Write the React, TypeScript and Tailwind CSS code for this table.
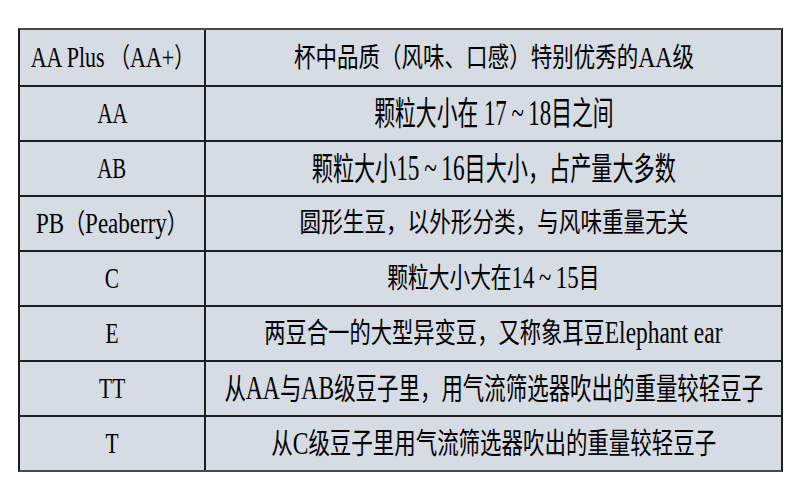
import React from "react";

type Row = {
  l: string;
  r: string;
  rf: string;
  rs: string;
  ls: string;
};

const rows: Row[] = [
  { l: "AA Plus （AA+）", r: "杯中品质（风味、口感）特别优秀的AA级", rf: "text-[27px]", rs: "scale-x-[0.797]", ls: "scale-x-[0.74]" },
  { l: "AA", r: "颗粒大小在 17\u2009~\u200918目之间", rf: "text-[33px]", rs: "scale-x-[0.63]", ls: "scale-x-[0.7]" },
  { l: "AB", r: "颗粒大小15\u2009~\u200916目大小，占产量大多数", rf: "text-[32px]", rs: "scale-x-[0.66]", ls: "scale-x-[0.7]" },
  { l: "PB（Peaberry）", r: "圆形生豆，以外形分类，与风味重量无关", rf: "text-[27px]", rs: "scale-x-[0.8]", ls: "scale-x-[0.775]" },
  { l: "C", r: "颗粒大小大在14\u2009~\u200915目", rf: "text-[28px]", rs: "scale-x-[0.74]", ls: "scale-x-[0.72]" },
  { l: "E", r: "两豆合一的大型异变豆，又称象耳豆Elephant ear", rf: "text-[28px]", rs: "scale-x-[0.76]", ls: "scale-x-[0.72]" },
  { l: "TT", r: "从AA与AB级豆子里，用气流筛选器吹出的重量较轻豆子", rf: "text-[30px]", rs: "scale-x-[0.715]", ls: "scale-x-[0.72]" },
  { l: "T", r: "从C级豆子里用气流筛选器吹出的重量较轻豆子", rf: "text-[29px]", rs: "scale-x-[0.74]", ls: "scale-x-[0.72]" },
];

function Runs({ text }: { text: string }) {
  const parts = text.match(/[A-Za-z0-9+~ \u2009]+|[^A-Za-z0-9+~ \u2009]+/g) || [];
  return (
    <>
      {parts.map((p, i) =>
        /^[A-Za-z0-9+~ \u2009]+$/.test(p) ? (
          <span key={i} className="text-[1.1em]">
            {p}
          </span>
        ) : (
          <span key={i}>{p}</span>
        )
      )}
    </>
  );
}

export default function App() {
  return (
    <div
      className="w-[800px] h-[500px] bg-white pt-[28px] pl-[18px] overflow-hidden"
      style={{ fontFamily: '"Liberation Serif", "Noto Sans CJK SC", serif' }}
    >
      <div className="w-[765px] h-[444px] grid grid-cols-[186px_minmax(0,1fr)] grid-rows-[repeat(8,minmax(0,1fr))] bg-[#d6dce4] border-x-2 border-x-[#1e1e1e] border-y-2 border-y-[#4a4a4a] text-black">
        {rows.map((row, i) => (
          <React.Fragment key={i}>
            <div
              className={
                "min-w-0 flex items-center justify-center border-r-2 border-r-[#1e1e1e] " +
                (i > 0 ? "border-t-2 border-t-[#1e1e1e]" : "")
              }
            >
              <span className={"shrink-0 inline-block whitespace-nowrap leading-none text-[27px] " + row.ls}>
                <Runs text={row.l} />
              </span>
            </div>
            <div
              className={
                "min-w-0 flex items-center justify-center " +
                (i > 0 ? "border-t-2 border-t-[#1e1e1e]" : "")
              }
            >
              <span className={"shrink-0 inline-block whitespace-nowrap leading-none " + row.rf + " " + row.rs}>
                <Runs text={row.r} />
              </span>
            </div>
          </React.Fragment>
        ))}
      </div>
    </div>
  );
}
